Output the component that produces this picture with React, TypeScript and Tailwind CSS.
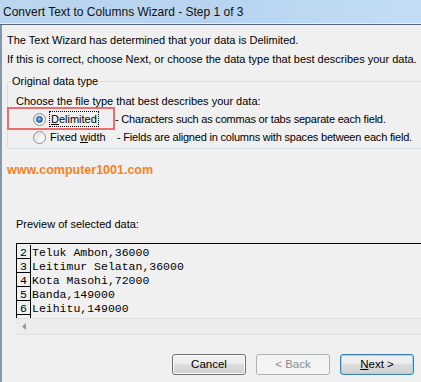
import React from 'react';

const rows = [
  { n: '2', text: 'Teluk Ambon,36000' },
  { n: '3', text: 'Leitimur Selatan,36000' },
  { n: '4', text: 'Kota Masohi,72000' },
  { n: '5', text: 'Banda,149000' },
  { n: '6', text: 'Leihitu,149000' },
  { n: '', text: '' },
];

const Radio: React.FC<{ checked?: boolean }> = ({ checked }) => (
  <span className="flex h-[13px] w-[13px] shrink-0 items-center justify-center rounded-full border border-[#8f8f8f] bg-[linear-gradient(135deg,#dcdcdc_0%,#f4f4f4_60%,#ffffff_100%)]">
    {checked && (
      <span className="h-[7px] w-[7px] rounded-full border border-[#1f4f80] bg-[radial-gradient(circle_at_45%_40%,#9fd6f6_0%,#3f8fd0_45%,#1d5a93_100%)]" />
    )}
  </span>
);

const Button: React.FC<{ children: React.ReactNode; variant?: 'normal' | 'disabled' | 'focus' }> = ({
  children,
  variant = 'normal',
}) => {
  const styles = {
    normal:
      'border-[#707070] bg-[linear-gradient(to_bottom,#f2f2f2_0%,#ebebeb_50%,#dddddd_50%,#cfcfcf_100%)] text-black shadow-[inset_0_0_0_1px_#fcfcfc]',
    disabled: 'border-[#adb2b5] bg-[#f4f4f4] text-[#8d8d8d]',
    focus:
      'border-[#3c7fb1] bg-[linear-gradient(to_bottom,#f2f2f2_0%,#ebebeb_50%,#dddddd_50%,#cfcfcf_100%)] text-black shadow-[inset_0_0_0_1px_#8fdcf8]',
  }[variant];
  return (
    <div className={`flex h-[21px] w-[74px] items-center justify-center rounded-[3px] border text-[11.5px] ${styles}`}>
      {children}
    </div>
  );
};

export default function App() {
  return (
    <div className="flex h-[382px] w-[421px] flex-col overflow-hidden bg-[#f0f0f0] font-['Liberation_Sans',Arial,sans-serif] text-[11px] text-black">
      {/* title bar */}
      <div className="flex h-[23px] shrink-0 items-center bg-[linear-gradient(to_right,#bdd6ef,#b7d3f0_50%,#c3ddf6)] pl-[3px] text-[12px] text-[#111]">
        Convert Text to Columns Wizard - Step 1 of 3
      </div>
      <div className="h-px shrink-0 bg-[#e4f0fa]" />
      <div className="h-px shrink-0 bg-[#56687b]" />

      <div className="flex flex-1 flex-col border-l-2 border-[#8597ab] pl-[5px] pt-[6px]">
        <div className="h-[19px] leading-[19px]">The Text Wizard has determined that your data is Delimited.</div>
        <div className="h-[19px] leading-[19px]">
          If this is correct, choose Next, or choose the data type that best describes your data.
        </div>

        <fieldset className="-mr-[10px] mt-[5px] rounded-[3px] border border-[#d5dfe5] pb-[2px]">
          <legend className="ml-[3px] h-[14px] px-px leading-[14px]">Original data type</legend>
          <div className="ml-[8px] mt-[4px] h-[18px] leading-[18px]">Choose the file type that best describes your data:</div>

          <div className="relative flex h-[18px] items-center">
            <div className="pointer-events-none absolute left-[-1px] top-[-3px] h-[23px] w-[108px] border-2 border-[#ee6e6e]" />
            <span className="ml-[25px]">
              <Radio checked />
            </span>
            <span className="ml-[3px] w-[66px]">
              <span className="border border-dotted border-black px-px py-px">
                <span className="underline">D</span>elimited
              </span>
            </span>
            <span className="tracking-[-0.2px]">- Characters such as commas or tabs separate each field.</span>
          </div>

          <div className="flex h-[18px] items-center">
            <span className="ml-[25px]">
              <Radio />
            </span>
            <span className="ml-[4px] w-[67px]">
              Fixed <span className="underline">w</span>idth
            </span>
            <span className="whitespace-nowrap tracking-[-0.2px]">- Fields are aligned in columns with spaces between each field.</span>
          </div>
        </fieldset>

        <div className="mt-[12px] h-[19px] text-[12.5px] font-bold leading-[19px] text-[#f5821f]">www.computer1001.com</div>

        <div className="ml-[9px] mt-[35px] h-[19px] leading-[19px]">Preview of selected data:</div>

        <div className="-mr-[10px] ml-[9px] mt-[9px] flex flex-col">
          <div className="h-[75px] overflow-hidden border-l border-t border-black pt-px font-['Liberation_Mono','Courier_New',monospace] text-[11.5px]">
            {rows.map((r, i) => (
              <div key={i} className="flex h-[14px] leading-[16px]">
                <div className="w-[14px] border-b border-r border-black text-center">{r.n}</div>
                <div className="pl-px">{r.text}</div>
              </div>
            ))}
          </div>
          <div className="flex h-[17px] items-center border-b border-t border-[#e0e0e0] bg-[#ececec] pl-[6px]">
            <svg width="4" height="7" viewBox="0 0 4 7">
              <path d="M4 0 L0 3.5 L4 7 Z" fill="#9a9a9a" />
            </svg>
          </div>
        </div>

        <div className="mr-[7px] mt-[19px] flex justify-end gap-[10px]">
          <Button>Cancel</Button>
          <Button variant="disabled">&lt; Back</Button>
          <Button variant="focus">
            <span>
              <span className="underline">N</span>ext &gt;
            </span>
          </Button>
        </div>
      </div>
    </div>
  );
}
